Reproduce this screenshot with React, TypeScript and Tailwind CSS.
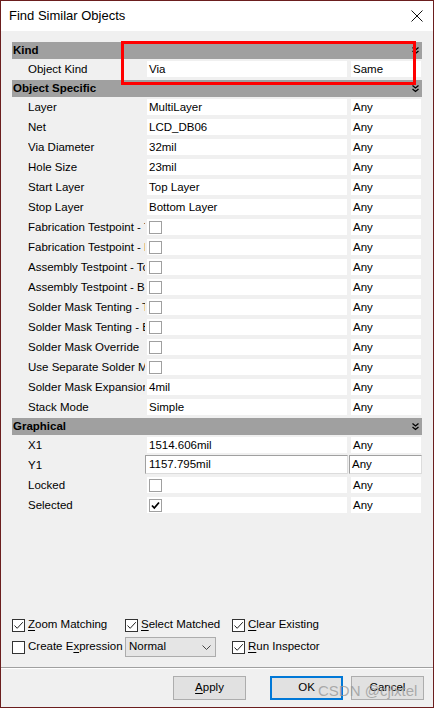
import React from 'react';

type Row = {
  label: string;
  value?: string;
  check?: 'off' | 'on';
  cmp: string;
  sunken?: boolean;
};

const kindRows: Row[] = [{ label: 'Object Kind', value: 'Via', cmp: 'Same' }];

const specificRows: Row[] = [
  { label: 'Layer', value: 'MultiLayer', cmp: 'Any' },
  { label: 'Net', value: 'LCD_DB06', cmp: 'Any' },
  { label: 'Via Diameter', value: '32mil', cmp: 'Any' },
  { label: 'Hole Size', value: '23mil', cmp: 'Any' },
  { label: 'Start Layer', value: 'Top Layer', cmp: 'Any' },
  { label: 'Stop Layer', value: 'Bottom Layer', cmp: 'Any' },
  { label: 'Fabrication Testpoint - Top', check: 'off', cmp: 'Any' },
  { label: 'Fabrication Testpoint - Bottom', check: 'off', cmp: 'Any' },
  { label: 'Assembly Testpoint - Top', check: 'off', cmp: 'Any' },
  { label: 'Assembly Testpoint - Bottom', check: 'off', cmp: 'Any' },
  { label: 'Solder Mask Tenting - Top', check: 'off', cmp: 'Any' },
  { label: 'Solder Mask Tenting - Bottom', check: 'off', cmp: 'Any' },
  { label: 'Solder Mask Override', check: 'off', cmp: 'Any' },
  { label: 'Use Separate Solder Mask Expansion', check: 'off', cmp: 'Any' },
  { label: 'Solder Mask Expansion', value: '4mil', cmp: 'Any' },
  { label: 'Stack Mode', value: 'Simple', cmp: 'Any' },
];

const graphicalRows: Row[] = [
  { label: 'X1', value: '1514.606mil', cmp: 'Any' },
  { label: 'Y1', value: '1157.795mil', cmp: 'Any', sunken: true },
  { label: 'Locked', check: 'off', cmp: 'Any' },
  { label: 'Selected', check: 'on', cmp: 'Any' },
];

function Collapse() {
  return (
    <svg width="7" height="8" viewBox="0 0 7 8" className="shrink-0">
      <path d="M0.5 0.5 L3.5 3 L6.5 0.5 M0.5 4 L3.5 6.5 L6.5 4" fill="none" stroke="#000" strokeWidth="1.3" />
    </svg>
  );
}

function CellCheck({ on }: { on: boolean }) {
  return (
    <div className="w-[13px] h-[13px] border border-[#a0a0a0] bg-white flex items-center justify-center">
      {on && (
        <svg width="9" height="9" viewBox="0 0 9 9">
          <path d="M1 4.5 L3.3 7 L8 1.5" fill="none" stroke="#000" strokeWidth="1.8" />
        </svg>
      )}
    </div>
  );
}

function Header({ title }: { title: string }) {
  return (
    <div className="h-[17px] mb-[1px] bg-[#a0a0a0] flex items-center justify-between pl-[1px] pr-[3px]">
      <span className="font-bold leading-[17px]">{title}</span>
      <Collapse />
    </div>
  );
}

function PropRow({ row }: { row: Row }) {
  return (
    <div className="h-[20px] flex items-start pt-[1px]">
      <div className="w-[16px] shrink-0" />
      <div className="w-[117px] mr-[2px] shrink-0 overflow-hidden whitespace-nowrap leading-[16px]">{row.label}</div>
      {row.sunken ? (
        <>
          <div className="-mt-[2px] -ml-[2px] w-[203px] h-[19px] border border-t-[#a0a0a0] border-l-[#a0a0a0] border-r-[#dcdcdc] border-b-[#dcdcdc] bg-white pl-[3px] leading-[17px] whitespace-nowrap">
            {row.value}
          </div>
          <div className="-mt-[2px] ml-[1px] w-[73px] h-[19px] border border-t-[#a0a0a0] border-l-[#a0a0a0] border-r-[#dcdcdc] border-b-[#dcdcdc] bg-white pl-[2px] leading-[17px]">
            {row.cmp}
          </div>
        </>
      ) : (
        <>
          <div className="w-[200px] h-[16px] bg-white pl-[2px] leading-[16px] whitespace-nowrap flex items-center">
            {row.check ? <CellCheck on={row.check === 'on'} /> : row.value}
          </div>
          <div className="ml-[4px] w-[70px] h-[16px] bg-white pl-[2px] leading-[16px]">{row.cmp}</div>
        </>
      )}
    </div>
  );
}

function Check({ on }: { on: boolean }) {
  return (
    <div className="w-[13px] h-[13px] border border-[#333333] bg-white flex items-center justify-center shrink-0">
      {on && (
        <svg width="11" height="11" viewBox="0 0 11 11">
          <path d="M1.5 5.5 L4.2 8.3 L9.8 2.2" fill="none" stroke="#222" strokeWidth="1" />
        </svg>
      )}
    </div>
  );
}

function Option({ on, children, width }: { on: boolean; children: React.ReactNode; width: string }) {
  return (
    <div className={`flex items-center gap-[3px] ${width}`}>
      <Check on={on} />
      <span className="whitespace-nowrap">{children}</span>
    </div>
  );
}

export default function App() {
  return (
    <div className="relative w-[434px] h-[708px] border border-[#6b1e1e] bg-[#f0f0f0] flex flex-col text-[11.5px] text-black font-['Liberation_Sans',Arial,sans-serif] overflow-hidden">
      <div className="h-[30px] bg-white flex items-center justify-between pl-[8px] pr-[10px] shrink-0">
        <span className="text-[13px]">Find Similar Objects</span>
        <svg width="12" height="12" viewBox="0 0 12 12">
          <path d="M0.5 0.5 L11.5 11.5 M11.5 0.5 L0.5 11.5" stroke="#111" strokeWidth="1" />
        </svg>
      </div>

      <div className="px-[11px] pt-[11px]">
        <Header title="Kind" />
        {kindRows.map((r) => (
          <PropRow key={r.label} row={r} />
        ))}
        <Header title="Object Specific" />
        {specificRows.map((r) => (
          <PropRow key={r.label} row={r} />
        ))}
        <Header title="Graphical" />
        {graphicalRows.map((r) => (
          <PropRow key={r.label} row={r} />
        ))}
      </div>

      <div className="flex-1" />

      <div className="px-[11px]">
        <div className="h-[22px] flex items-center">
          <Option on width="w-[113px]">
            <span className="underline underline-offset-2">Z</span>oom Matching
          </Option>
          <Option on width="w-[107px]">
            <span className="underline underline-offset-2">S</span>elect Matched
          </Option>
          <Option on width="">
            <span className="underline underline-offset-2">C</span>lear Existing
          </Option>
        </div>
        <div className="h-[22px] flex items-center">
          <Option on={false} width="w-[113px]">
            Create E<span className="underline underline-offset-2">x</span>pression
          </Option>
          <div className="w-[91px] h-[20px] mr-[16px] bg-[#e5e5e5] border border-[#acacac] flex items-center justify-between pl-[3px] pr-[4px]">
            <span>Normal</span>
            <svg width="9" height="5" viewBox="0 0 9 5">
              <path d="M0.5 0.5 L4.5 4.5 L8.5 0.5" fill="none" stroke="#444" strokeWidth="1" />
            </svg>
          </div>
          <Option on width="">
            <span className="underline underline-offset-2">R</span>un Inspector
          </Option>
        </div>
      </div>

      <div className="mt-[9px] h-[2px] border-t border-[#a0a0a0] border-b border-b-white shrink-0" />

      <div className="h-[38px] flex items-center justify-end pr-[9px] shrink-0">
        <button className="w-[73px] h-[24px] bg-[#e1e1e1] border border-[#adadad]">
          <span className="underline underline-offset-2">A</span>pply
        </button>
        <button className="ml-[24px] w-[73px] h-[24px] bg-[#e1e1e1] border-2 border-[#0078d7]">OK</button>
        <button className="ml-[8px] w-[73px] h-[24px] bg-[#e1e1e1] border border-[#adadad]">Cancel</button>
      </div>

      <div className="absolute left-[120px] top-[40px] w-[295px] h-[44px] border-[3px] border-[#ff0000] pointer-events-none" />
      <div className="absolute left-[317px] top-[679px] text-[15px] text-[#9a9a9a]/80 pointer-events-none whitespace-nowrap">
        CSDN @cjlxtel
      </div>
    </div>
  );
}
